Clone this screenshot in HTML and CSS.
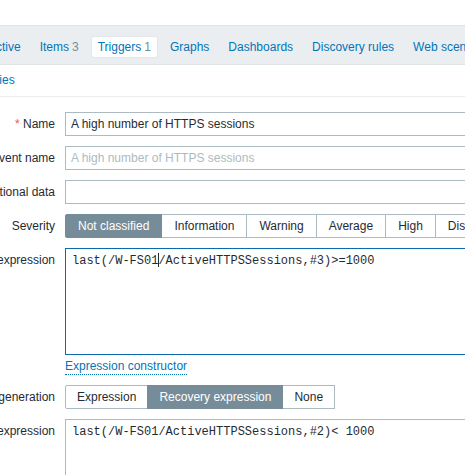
FILE: index.html
```html
<!DOCTYPE html>
<html lang="en">
<head>
  <meta charset="UTF-8" />
  <title>Triggers - W-FS01</title>
  <link rel="stylesheet" href="styles.css">
</head>
<body>
  <div class="page">
    <div class="header"></div>

    <!-- host navigation -->
    <ul class="host-nav">
      <li><a href="#">Active</a></li>
      <li><a href="#">Items</a><span class="count">3</span></li>
      <li class="selected"><a href="#">Triggers</a><span class="count">1</span></li>
      <li><a href="#">Graphs</a></li>
      <li><a href="#">Dashboards</a></li>
      <li><a href="#">Discovery rules</a></li>
      <li><a href="#">Web scenarios</a></li>
    </ul>

    <!-- form tabs -->
    <ul class="form-tabs">
      <li class="active"><a href="#">Trigger</a></li>
      <li><a href="#">Tags</a></li>
      <li><a href="#">Dependencies</a></li>
    </ul>

    <form class="form-grid">
      <label class="form-label"><span class="required">*</span> Name</label>
      <div class="form-field">
        <input class="text-input" type="text" value="A high number of HTTPS sessions">
      </div>

      <label class="form-label">Event name</label>
      <div class="form-field">
        <input class="text-input" type="text" placeholder="A high number of HTTPS sessions">
      </div>

      <label class="form-label">Operational data</label>
      <div class="form-field">
        <input class="text-input" type="text">
      </div>

      <label class="form-label">Severity</label>
      <div class="form-field">
        <ul class="radio-list">
          <li class="checked">Not classified</li>
          <li>Information</li>
          <li>Warning</li>
          <li>Average</li>
          <li>High</li>
          <li>Disaster</li>
        </ul>
      </div>

      <label class="form-label">Problem expression</label>
      <div class="form-field">
        <div class="textarea focused">last(/W-FS01<span class="caret"></span>/ActiveHTTPSSessions,#3)&gt;=1000</div>
        <a class="link-alt" href="#">Expression constructor</a>
      </div>

      <label class="form-label">OK event generation</label>
      <div class="form-field">
        <ul class="radio-list compact">
          <li>Expression</li>
          <li class="checked">Recovery expression</li>
          <li>None</li>
        </ul>
      </div>

      <label class="form-label">Recovery expression</label>
      <div class="form-field">
        <div class="textarea">last(/W-FS01/ActiveHTTPSSessions,#2)&lt; 1000</div>
      </div>
    </form>
  </div>
</body>
</html>
```

FILE: styles.css
```css
body {
  margin: 0;
  font-family: "Liberation Sans", Arial, sans-serif;
  font-size: 12px;
  color: #1f2c33;
  background: #fff;
  overflow: hidden;
}

a {
  color: #0275b8;
  text-decoration: none;
}

ul {
  list-style: none;
  margin: 0;
  padding: 0;
}

/* the view is scrolled a bit to the right */
.page {
  margin-left: -200px;
  width: 1000px;
}

.header {
  height: 25px;
}

.host-nav {
  display: flex;
  align-items: center;
  gap: 7px;
  padding: 11px 0 7px 182px;
  background: #ebeef0;
  border-top: 1px solid #dfe4e7;
  border-bottom: 1px solid #dfe4e7;
}

.host-nav li {
  padding: 0 6px;
  line-height: 20px;
  white-space: nowrap;
  border-radius: 2px;
}

.host-nav li.selected {
  background: #fff;
  box-shadow: 0 0 0 1px #e3e7ea;
}

.host-nav .count {
  color: #768d99;
  margin-left: 3px;
}

.form-tabs {
  display: flex;
  padding-left: 25px;
  line-height: 31px;
  border-bottom: 1px solid #ebeef0;
}

.form-tabs li {
  padding: 0 10px;
}

.form-grid {
  display: grid;
  grid-template-columns: 255px 1fr;
  column-gap: 10px;
  row-gap: 10px;
  padding-top: 15px;
}

.form-label {
  text-align: right;
  line-height: 24px;
  white-space: nowrap;
}

.required {
  color: #e45959;
}

.text-input {
  display: block;
  box-sizing: border-box;
  width: 453px;
  height: 24px;
  padding: 0 5px;
  margin: 0;
  border: 1px solid #acbbc2;
  border-radius: 0;
  font-family: "Liberation Sans", Arial, sans-serif;
  font-size: 12px;
  color: #1f2c33;
  outline: none;
}

.text-input::placeholder {
  color: #acbbc2;
}

.radio-list {
  display: flex;
}

.radio-list li {
  line-height: 22px;
  padding: 0 12px;
  border: 1px solid #acbbc2;
  margin-left: -1px;
  white-space: nowrap;
  background: #fff;
}

.radio-list.compact li {
  padding: 0 11px;
}

.radio-list li:first-child {
  margin-left: 0;
  border-radius: 2px 0 0 2px;
}

.radio-list li.checked {
  background: #768d99;
  border-color: #768d99;
  color: #fff;
  position: relative;
}

.textarea {
  box-sizing: border-box;
  width: 453px;
  height: 107px;
  padding: 4px 6px;
  border: 1px solid #acbbc2;
  font-family: "Liberation Mono", "Courier New", monospace;
  font-size: 12px;
  line-height: 16px;
  white-space: pre;
}

.textarea.focused {
  border-color: #0b6aad;
}

.caret {
  display: inline-block;
  width: 1px;
  height: 14px;
  margin: 0 -1px 0 0;
  background: #1f2c33;
  vertical-align: -3px;
}

.link-alt {
  display: inline-block;
  margin-top: 4px;
  line-height: 15px;
  border-bottom: 1px dotted #0275b8;
}
```
